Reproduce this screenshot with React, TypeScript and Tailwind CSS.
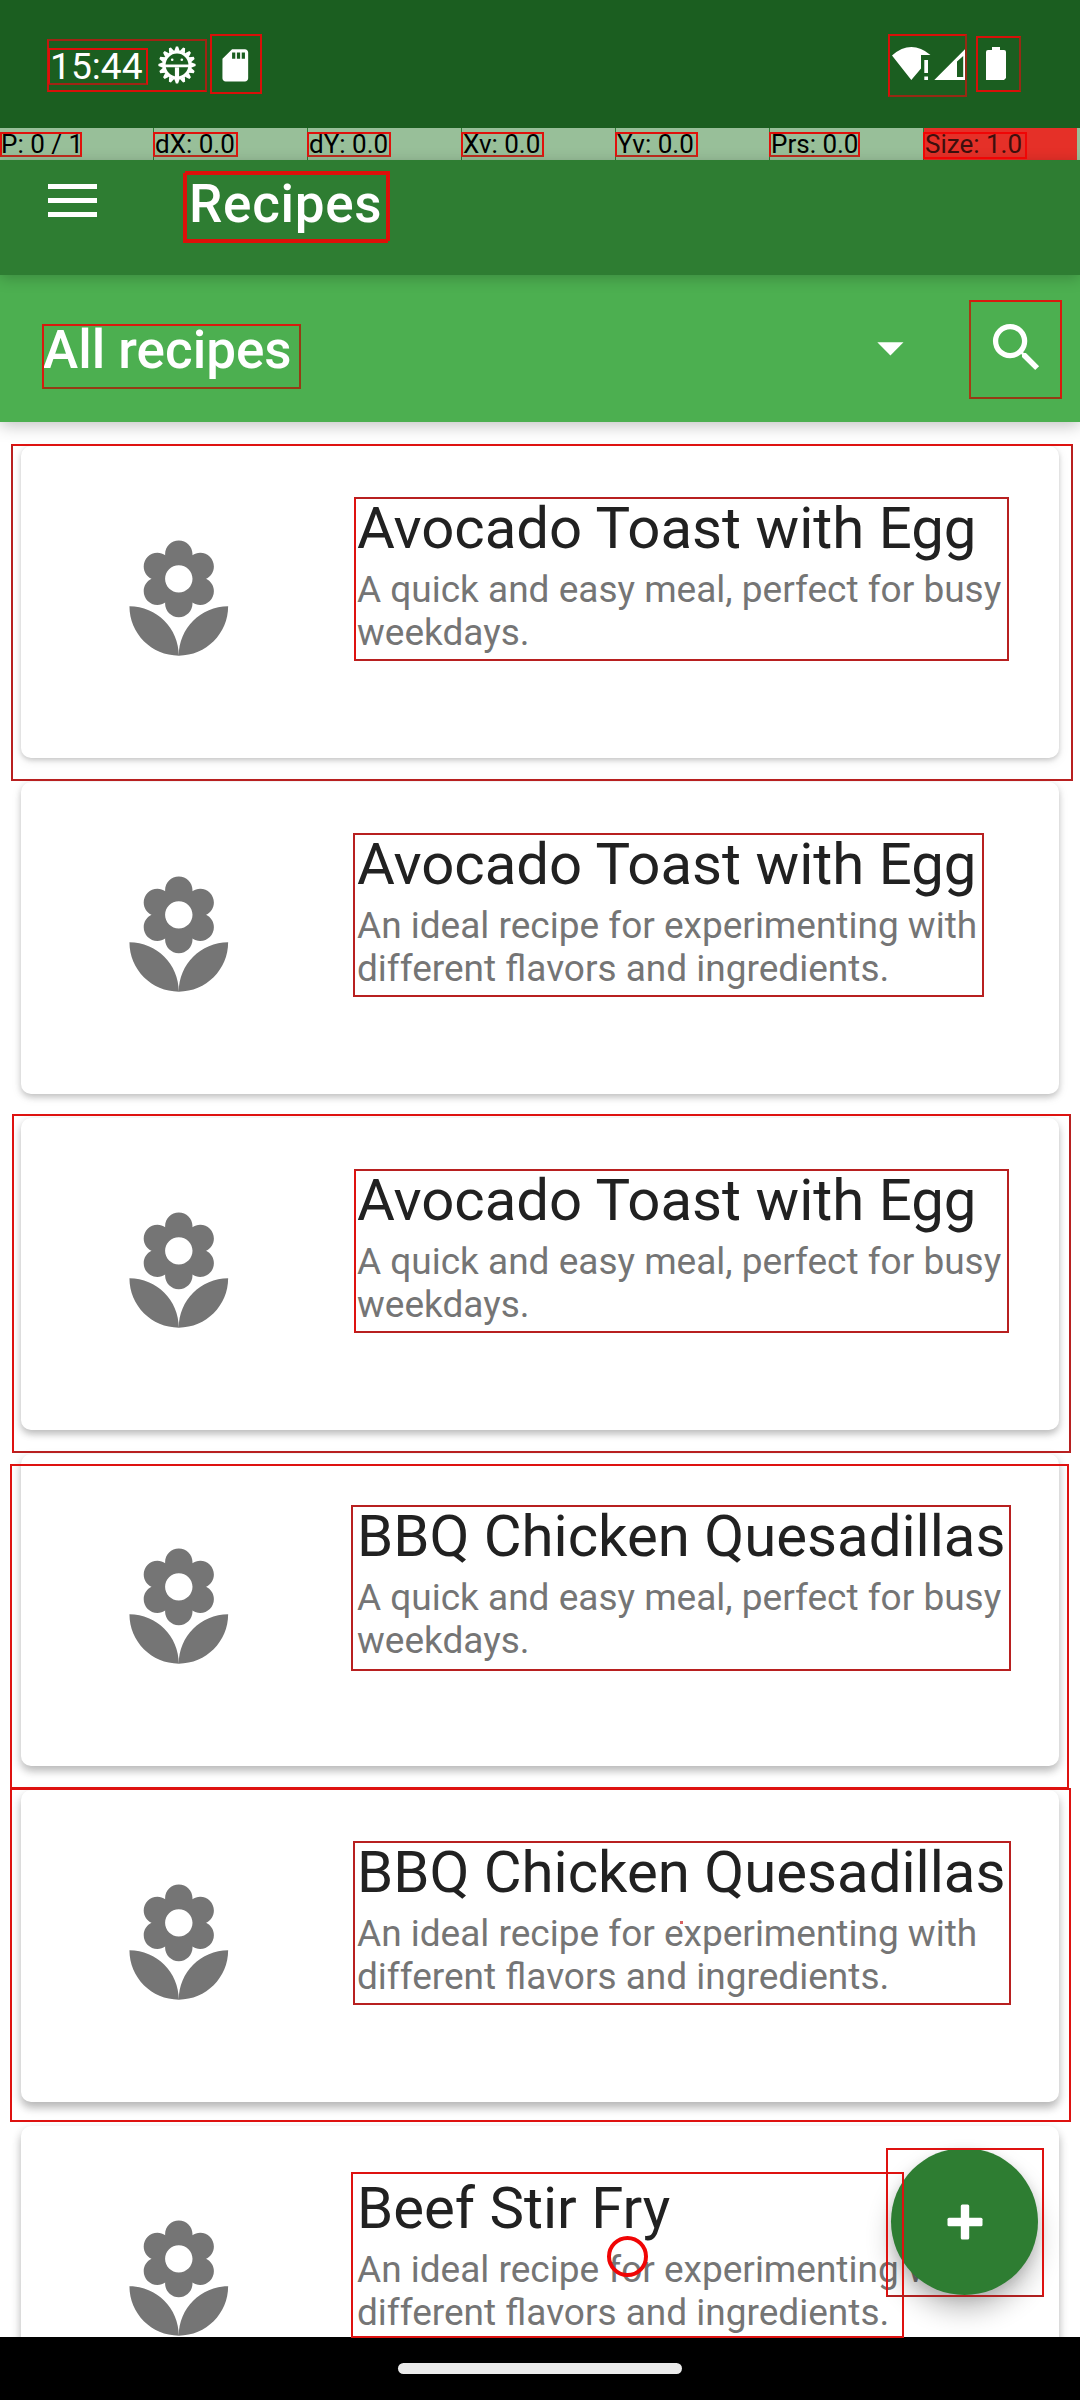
const descriptions = {
  quick: "A quick and easy meal, perfect for busy weekdays.",
  ideal: "An ideal recipe for experimenting with different flavors and ingredients.",
};

const recipes = [
  { title: "Avocado Toast with Egg", text: descriptions.quick, shadow: "shadow-[0_2px_5px_rgba(0,0,0,0.18),0_3px_12px_rgba(0,0,0,0.08)]" },
  { title: "Avocado Toast with Egg", text: descriptions.ideal, shadow: "shadow-[0_3px_6px_rgba(0,0,0,0.20),0_3px_12px_rgba(0,0,0,0.08)]" },
  { title: "Avocado Toast with Egg", text: descriptions.quick, shadow: "shadow-[0_4px_7px_rgba(0,0,0,0.22),0_3px_12px_rgba(0,0,0,0.08)]" },
  { title: "BBQ Chicken Quesadillas", text: descriptions.quick, shadow: "shadow-[0_5px_8px_rgba(0,0,0,0.23),0_3px_12px_rgba(0,0,0,0.08)]" },
  { title: "BBQ Chicken Quesadillas", text: descriptions.ideal, shadow: "shadow-[0_6px_8px_rgba(0,0,0,0.23),0_3px_12px_rgba(0,0,0,0.09)]" },
  { title: "Beef Stir Fry", text: descriptions.ideal, shadow: "shadow-[0_6px_8px_rgba(0,0,0,0.23),0_3px_12px_rgba(0,0,0,0.09)]" },
];

const pointerStats = ["P: 0 / 1", "dX: 0.0", "dY: 0.0", "Xv: 0.0", "Yv: 0.0", "Prs: 0.0"];

// Outlines around detected elements: left, top, right, bottom, border colours.
const BRIGHT = "border-[#de1210]";
const DARK = "border-[#b82020]";
const MIX = "border-[#b82020] border-l-[#de1210]";
const outlines: [number, number, number, number, string][] = [
  [47, 39, 207, 92, "border-[#a02414] border-l-[#c4180e] border-b-[#d81009]"],
  [48, 48, 148, 85, "border-[#de1009] border-b-[#a02414]"],
  [210, 34, 262, 94, "border-[#d81009]"],
  [888, 34, 967, 97, "border-[#d81009] border-r-[#962a14] border-b-[#962a14]"],
  [976, 36, 1021, 92, "border-[#d81009] border-r-[#962a14]"],
  [0, 132, 82, 157, "border-[#e0120c] border-b-[#b82a1c]"],
  [153, 132, 238, 157, "border-[#e0120c] border-b-[#b82a1c]"],
  [307, 132, 391, 157, "border-[#e0120c] border-b-[#b82a1c]"],
  [461, 132, 544, 157, "border-[#e0120c] border-b-[#b82a1c]"],
  [615, 132, 698, 157, "border-[#e0120c] border-b-[#b82a1c]"],
  [769, 132, 860, 157, "border-[#e0120c] border-b-[#b82a1c]"],
  [923, 132, 1027, 159, "border-[#f00505]"],
  [183, 173, 388, 243, "border-[#de1009]"],
  [185, 171, 390, 241, "border-[#de1009]"],
  [42, 324, 301, 389, "border-[#d81a0e] border-r-[#963a14] border-b-[#963a14]"],
  [969, 300, 1062, 399, "border-[#d81a0e] border-l-[#a83a14] border-b-[#963a14]"],
  [11, 444, 1073, 781, "border-[#b82020] border-t-[#de1210]"],
  [354, 497, 1009, 661, MIX],
  [353, 833, 984, 997, DARK],
  [12, 1114, 1071, 1453, "border-[#de1210] border-r-[#b82020] border-b-[#b82020]"],
  [354, 1169, 1009, 1333, MIX],
  [10, 1464, 1069, 1789, BRIGHT],
  [351, 1505, 1011, 1671, DARK],
  [10, 1788, 1071, 2122, BRIGHT],
  [353, 1841, 1011, 2005, DARK],
  [351, 2172, 904, 2338, BRIGHT],
  [886, 2148, 1044, 2297, "border-[#de1210] border-b-[#ae2020]"],
];

const teeth = Array.from({ length: 16 }, (_, i) => i * 22.5);

function GearIcon() {
  return (
    <svg className="h-[38px] w-[38px]" viewBox="-19 -19 38 38" fill="#fff">
      {teeth.map((a) => (
        <path key={a} d="M-2.7 -14 L-1.1 -18.6 L1.1 -18.6 L2.7 -14Z" transform={`rotate(${a})`} />
      ))}
      <circle r="13" fill="none" stroke="#fff" strokeWidth="3.2" />
      <circle cx="-4.8" cy="-5.2" r="1.3" />
      <circle cx="4.8" cy="-5.2" r="1.3" />
      <path d="M-12 -0.4H12V2.2H-12Z M-2.1 2V12.5H2.1V2Z" />
    </svg>
  );
}

function SdCardIcon() {
  return (
    <svg className="h-[38.6px] w-[38.6px]" viewBox="0 0 24 24" fill="#fff">
      <path d="M18 2h-8L4.02 8 4 20c0 1.1.9 2 2 2h12c1.1 0 2-.9 2-2V4c0-1.1-.9-2-2-2zm-6 6h-2V4h2v4zm3 0h-2V4h2v4zm3 0h-2V4h2v4z" />
    </svg>
  );
}

function SignalIcons() {
  return (
    <svg className="h-[34px] w-[74px]" viewBox="892 47 74 34" fill="#fff">
      <path d="M892 55.5 Q911 39 930.5 55 H921 V68.5 L911.3 80Z" />
      <path d="M924.3 60H928V73H924.3Z M924.3 76.5H928V80H924.3Z" />
      <path fillRule="evenodd" d="M934.3 80 L965.2 49 V80Z M957 61.5 V77 H963.2 V56Z" />
    </svg>
  );
}

function BatteryIcon() {
  return (
    <svg className="h-[33px] w-5" viewBox="0 0 20 33" fill="#fff">
      <path d="M6 0H14V3H18Q20 3 20 5V31L18 33H0V5Q0 3 2 3H6Z" />
    </svg>
  );
}

function Flower() {
  return (
    <svg className="h-[131.6px] w-[131.6px]" viewBox="0 0 24 24" fill="#757575">
      <path d="M12 22c4.97 0 9-4.03 9-9-4.97 0-9 4.03-9 9zM5.6 10.25c0 1.38 1.12 2.5 2.5 2.5.53 0 1.01-.16 1.42-.44l-.02.19c0 1.38 1.12 2.5 2.5 2.5s2.5-1.12 2.5-2.5l-.02-.19c.4.28.89.44 1.42.44 1.38 0 2.5-1.12 2.5-2.5 0-1-.59-1.85-1.43-2.25.84-.4 1.43-1.25 1.43-2.25 0-1.38-1.12-2.5-2.5-2.5-.53 0-1.01.16-1.42.44l.02-.19C14.5 2.12 13.38 1 12 1S9.5 2.12 9.5 3.5l.02.19c-.4-.28-.89-.44-1.42-.44-1.38 0-2.5 1.12-2.5 2.5 0 1 .59 1.85 1.43 2.25-.84.4-1.43 1.25-1.43 2.25zM12 5.5c1.38 0 2.5 1.12 2.5 2.5s-1.12 2.5-2.5 2.5S9.5 9.38 9.5 8s1.12-2.5 2.5-2.5zM3 13c0 4.97 4.03 9 9 9 0-4.97-4.03-9-9-9z" />
    </svg>
  );
}

export default function App() {
  return (
    <div className="relative flex h-[2400px] w-[1080px] flex-col overflow-hidden bg-white font-['Roboto',sans-serif]">
      <header className="flex h-32 shrink-0 items-start justify-between bg-[#1b5e20] pr-[74px] pl-[50px]">
        <div className="flex items-start">
          <span className="mt-[44px] w-[108px] text-[37.2px] leading-[44px] text-white">15:44</span>
          <div className="mt-[46px]"><GearIcon /></div>
          <div className="mt-[46px] ml-[20px]"><SdCardIcon /></div>
        </div>
        <div className="mt-[47px] flex gap-5">
          <SignalIcons />
          <BatteryIcon />
        </div>
      </header>

      <div className="flex h-8 shrink-0 gap-px bg-[#2e7d32] text-[26px] leading-[30px] text-black">
        {pointerStats.map((s) => (
          <div key={s} className="w-[153px] shrink-0 bg-[#98bf99] pt-px pl-px whitespace-nowrap">{s}</div>
        ))}
        <div className="w-[153px] shrink-0 bg-[#e53028] pt-px pl-px whitespace-nowrap text-[#3d0f0d]">Size: 1.0</div>
        <div className="-ml-px grow bg-[#98bf99]" />
      </div>

      <div className="relative z-20 flex h-[115px] shrink-0 items-start bg-[#2e7d32] pl-12 shadow-[0_3px_14px_rgba(0,0,0,0.22)]">
        <div className="mt-6 flex w-[141px] flex-col gap-[9px]">
          <span className="h-[5px] w-[49px] bg-white" />
          <span className="h-[5px] w-[49px] bg-white" />
          <span className="h-[5px] w-[49px] bg-white" />
        </div>
        <h1 className="mt-[13px] text-[53px] leading-[62px] font-medium tracking-[0.7px] text-white">Recipes</h1>
      </div>

      <div className="relative z-10 flex h-[147px] shrink-0 items-start bg-[#4caf50] pl-[43px] shadow-[0_3px_16px_rgba(0,0,0,0.26)]">
        <span className="mt-[44px] w-[834px] text-[53px] leading-[62px] font-medium text-white">All recipes</span>
        <svg className="mt-[67px] h-[14px] w-[27px]" viewBox="0 0 27 14" fill="#fff"><path d="M0.3 0.2H26.5L13.4 13.4Z" /></svg>
        <svg className="mt-[41px] ml-[80.5px] h-[63.4px] w-[63.4px]" viewBox="0 0 24 24" fill="#fff">
          <path d="M15.5 14h-.79l-.28-.27A6.471 6.471 0 0 0 16 9.5 6.5 6.5 0 1 0 9.5 16c1.61 0 3.09-.59 4.23-1.57l.27.28v.79l5 4.99L20.49 19l-4.99-5zm-6 0C7.01 14 5 11.99 5 9.5S7.01 5 9.5 5 14 7.01 14 9.5 11.99 14 9.5 14z" />
        </svg>
      </div>

      <main className="flex h-[1915px] shrink-0 flex-col gap-6 overflow-hidden px-[21px] pt-6">
        {recipes.map((r, i) => (
          <article key={i} className={`relative flex h-[312px] shrink-0 items-start rounded-[10px] bg-white ${r.shadow}`}>
            <div className="mt-[88.5px] w-[336px] pl-[91.5px]"><Flower /></div>
            <div className="mt-12 w-[660px]">
              <h2 className="text-[58.1px] leading-[68px] whitespace-nowrap text-[#212121]">{r.title}</h2>
              <p className="mt-[6px] text-[37px] leading-[43px] text-[#757575]">{r.text}</p>
            </div>
          </article>
        ))}
      </main>

      <footer className="relative z-10 flex h-[63px] shrink-0 justify-center bg-black pt-[26px]">
        <span className="h-[11px] w-[284px] rounded-full bg-[#ebebeb]" />
      </footer>

      <button className="absolute top-[2148px] left-[891px] flex h-[147px] w-[147px] items-center justify-center rounded-full bg-[#2e7d32] shadow-[0_16px_26px_rgba(0,0,0,0.24),0_4px_12px_rgba(0,0,0,0.12)]">
        <svg className="h-9 w-9" viewBox="0 0 36 36" fill="#fff">
          <rect x="0.5" y="13.8" width="35" height="8.4" rx="1.5" />
          <rect x="13.8" y="0.5" width="8.4" height="35" rx="1.5" />
        </svg>
      </button>

      {outlines.map(([l, t, r, b, c], i) => (
        <span
          key={i}
          className={`pointer-events-none absolute z-30 border-2 ${c}`}
          style={{ left: l, top: t, width: r - l, height: b - t }}
        />
      ))}
      <span className="absolute top-[2236px] left-[607px] z-30 h-[41px] w-[41px] rounded-full border-4 border-[#f00505]" />
      <span className="absolute top-[1921px] left-[680px] z-30 h-[3px] w-[3px] bg-[#d86060]" />
    </div>
  );
}
